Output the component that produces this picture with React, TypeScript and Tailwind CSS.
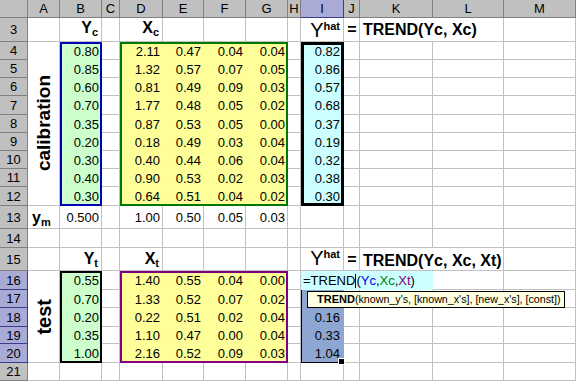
import React from "react";

const COL = ["col-start-1", "col-start-2", "col-start-3", "col-start-4", "col-start-5", "col-start-6", "col-start-7", "col-start-8", "col-start-9", "col-start-10", "col-start-11", "col-start-12", "col-start-13", "col-start-14"];
const ROW = ["row-start-1", "row-start-2", "row-start-3", "row-start-4", "row-start-5", "row-start-6", "row-start-7", "row-start-8", "row-start-9", "row-start-10", "row-start-11", "row-start-12", "row-start-13", "row-start-14", "row-start-15", "row-start-16", "row-start-17", "row-start-18", "row-start-19", "row-start-20"];
const LETTERS = ["", "A", "B", "C", "D", "E", "F", "G", "H", "I", "J", "K", "L", "M"];

// excel row 3 sits on grid row 2
const at = (col: number, row: number) => `${COL[col - 1]} ${ROW[row - 2]}`;

const calib = [
    { y: "0.80", x: ["2.11", "0.47", "0.04", "0.04"], yhat: "0.82" },
    { y: "0.85", x: ["1.32", "0.57", "0.07", "0.05"], yhat: "0.86" },
    { y: "0.60", x: ["0.81", "0.49", "0.09", "0.03"], yhat: "0.57" },
    { y: "0.70", x: ["1.77", "0.48", "0.05", "0.02"], yhat: "0.68" },
    { y: "0.35", x: ["0.87", "0.53", "0.05", "0.00"], yhat: "0.37" },
    { y: "0.20", x: ["0.18", "0.49", "0.03", "0.04"], yhat: "0.19" },
    { y: "0.30", x: ["0.40", "0.44", "0.06", "0.04"], yhat: "0.32" },
    { y: "0.40", x: ["0.90", "0.53", "0.02", "0.03"], yhat: "0.38" },
    { y: "0.30", x: ["0.64", "0.51", "0.04", "0.02"], yhat: "0.30" },
];

const test = [
    { y: "0.55", x: ["1.40", "0.55", "0.04", "0.00"], yhat: "" },
    { y: "0.70", x: ["1.33", "0.52", "0.07", "0.02"], yhat: "" },
    { y: "0.20", x: ["0.22", "0.51", "0.02", "0.04"], yhat: "0.16" },
    { y: "0.35", x: ["1.10", "0.47", "0.00", "0.04"], yhat: "0.33" },
    { y: "1.00", x: ["2.16", "0.52", "0.09", "0.03"], yhat: "1.04" },
];

const means = ["1.00", "0.50", "0.05", "0.03"];

function Num({ col, row, children, pad = "pr-[3px]" }: { col: number; row: number; children: React.ReactNode; pad?: string }) {
    return (
        <div className={`${at(col, row)} flex items-center justify-end ${pad} text-[13px] leading-none`}>
            {children}
        </div>
    );
}

function Sub({ main, sub }: { main: string; sub: string }) {
    return (
        <span className="font-bold text-[16px] leading-none">
            {main}
            <span className="relative top-[3px] text-[11px]">{sub}</span>
        </span>
    );
}

function YHat({ row }: { row: number }) {
    return (
        <div className={`${at(10, row)} flex items-start justify-end pr-[4px] ${row === 3 ? "pt-[2px]" : "pt-0"}`}>
            <span className="text-[20px] leading-none">Y</span>
            <span className="text-[11px] font-bold leading-none mt-[1px]">hat</span>
        </div>
    );
}

export default function App() {
    const gridCells: React.ReactNode[] = [];
    for (let r = 1; r <= 20; r++) {
        for (let c = 1; c <= 14; c++) {
            const key = `g-${r}-${c}`;
            const pos = `${COL[c - 1]} ${ROW[r - 1]}`;
            if (r === 1 || c === 1) {
                const selected = (r === 1 && c === 10) || (c === 1 && r >= 15 && r <= 19);
                const label = r === 1 ? LETTERS[c - 1] : String(r + 1);
                gridCells.push(
                    <div
                        key={key}
                        className={`${pos} flex items-center justify-center border-r border-b text-[13px] leading-none ${selected ? "bg-[#aaaad6] border-[#3c3c8c]" : "bg-[#c0c0c0] border-[#808080]"}`}
                    >
                        {label}
                    </div>
                );
            } else {
                gridCells.push(<div key={key} className={`${pos} bg-white border-r border-b border-[#c0c0c0]`} />);
            }
        }
    }

    return (
        <div className="w-[576px] h-[381px] overflow-hidden bg-white font-['Liberation_Sans',Arial,sans-serif] text-black">
            <div className="relative w-[576px] h-[381px] grid grid-cols-[28px_32px_42px_18px_43px_41px_42px_42px_13px_43px_16px_73px_71px_1fr] grid-rows-[18px_24px_18px_18px_18px_19px_18px_18px_18px_18px_19px_23px_19px_23px_19px_18px_19px_17px_19px_1fr]">
                {gridCells}

                {/* merged label cells */}
                <div className={`${at(2, 4)} row-span-9 bg-white border-r border-b border-[#c0c0c0] flex items-center justify-center`}>
                    <span className="[writing-mode:vertical-rl] rotate-180 font-bold text-[19px] leading-none">calibration</span>
                </div>
                <div className={`${at(2, 16)} row-span-5 bg-white border-r border-b border-[#c0c0c0] flex items-center justify-center`}>
                    <span className="[writing-mode:vertical-rl] rotate-180 font-bold text-[20px] leading-none">test</span>
                </div>

                {/* overflow text cells */}
                <div className={`${at(12, 3)} col-span-2 bg-white border-r border-b border-[#c0c0c0] flex items-start pl-[3px] pt-[4px]`}>
                    <span className="font-bold text-[16px] leading-none">TREND(Yc, Xc)</span>
                </div>
                <div className={`${at(12, 15)} col-span-2 bg-white border-r border-b border-[#c0c0c0] flex items-start pl-[3px] pt-[5px]`}>
                    <span className="font-bold text-[16px] leading-none">TREND(Yc, Xc, Xt)</span>
                </div>

                {/* coloured ranges */}
                <div className={`${at(3, 4)} row-span-9 bg-[#ccffcc] border-2 border-[#0000b4]`} />
                <div className={`${at(5, 4)} col-span-4 row-span-9 bg-[#ffff99] border-2 border-[#007800]`} />
                <div className={`${at(10, 4)} row-span-9 bg-[#ccffff] border-[3px] border-black`} />
                <div className={`${at(3, 16)} row-span-5 bg-[#ccffcc] border-2 border-black`} />
                <div className={`${at(5, 16)} col-span-4 row-span-5 bg-[#ffff99] border-2 border-[#800080]`} />

                {/* selection I17:I20 */}
                <div className={`${at(10, 17)} row-span-4 bg-[#8da6d2] border-l border-b border-black`} />

                {/* headings row 3 */}
                <div className={`${at(3, 3)} flex items-start justify-end pr-[4px] pt-[2px]`}>
                    <Sub main="Y" sub="c" />
                </div>
                <div className={`${at(5, 3)} flex items-start justify-end pr-[4px] pt-[2px]`}>
                    <Sub main="X" sub="c" />
                </div>
                <YHat row={3} />
                <div className={`${at(11, 3)} flex items-center justify-center font-bold text-[16px] leading-none`}>=</div>

                {/* calibration data */}
                {calib.map((d, i) => (
                    <React.Fragment key={`c${i}`}>
                        <Num col={3} row={4 + i}>{d.y}</Num>
                        {d.x.map((v, j) => (
                            <Num key={j} col={5 + j} row={4 + i}>{v}</Num>
                        ))}
                        <Num col={10} row={4 + i} pad="pr-[4px]">{d.yhat}</Num>
                    </React.Fragment>
                ))}

                {/* means row 13 */}
                <div className={`${at(2, 13)} flex items-center pl-[4px]`}>
                    <Sub main="y" sub="m" />
                </div>
                <Num col={3} row={13}>0.500</Num>
                {means.map((v, j) => (
                    <Num key={`m${j}`} col={5 + j} row={13}>{v}</Num>
                ))}

                {/* headings row 15 */}
                <div className={`${at(3, 15)} flex items-start justify-end pr-[4px] pt-[3px]`}>
                    <Sub main="Y" sub="t" />
                </div>
                <div className={`${at(5, 15)} flex items-start justify-end pr-[4px] pt-[3px]`}>
                    <Sub main="X" sub="t" />
                </div>
                <YHat row={15} />
                <div className={`${at(11, 15)} flex items-center justify-center font-bold text-[16px] leading-none`}>=</div>

                {/* test data */}
                {test.map((d, i) => (
                    <React.Fragment key={`t${i}`}>
                        <Num col={3} row={16 + i}>{d.y}</Num>
                        {d.x.map((v, j) => (
                            <Num key={j} col={5 + j} row={16 + i}>{v}</Num>
                        ))}
                        {d.yhat && <Num col={10} row={16 + i} pad="pr-[4px]">{d.yhat}</Num>}
                    </React.Fragment>
                ))}

                {/* formula being edited in I16 */}
                <div className={`${at(10, 16)} col-span-3 bg-[#ccffff] flex items-center pl-[2px] text-[13px] leading-none whitespace-nowrap`}>
                    <span>=TREND</span>
                    <span className="inline-block w-px h-[14px] bg-black" />
                    <span>(</span>
                    <span className="text-[#0000ff]">Yc</span>
                    <span>,</span>
                    <span className="text-[#008000]">Xc</span>
                    <span>,</span>
                    <span className="text-[#800080]">Xt</span>
                    <span>)</span>
                </div>

                {/* fill handle */}
                <div className="absolute left-[339px] top-[359px] w-[5px] h-[5px] bg-black outline outline-1 outline-white" />

                {/* function tooltip */}
                <div className="absolute left-[307px] top-[291px] h-[17px] flex items-center bg-[#ffffe1] border border-black pl-[9px] pr-[3px] text-[10.7px] leading-none whitespace-nowrap">
                    <span className="font-bold text-[11px]">TREND</span>
                    <span>(known_y's, [known_x's], [new_x's], [const])</span>
                </div>
            </div>
        </div>
    );
}
